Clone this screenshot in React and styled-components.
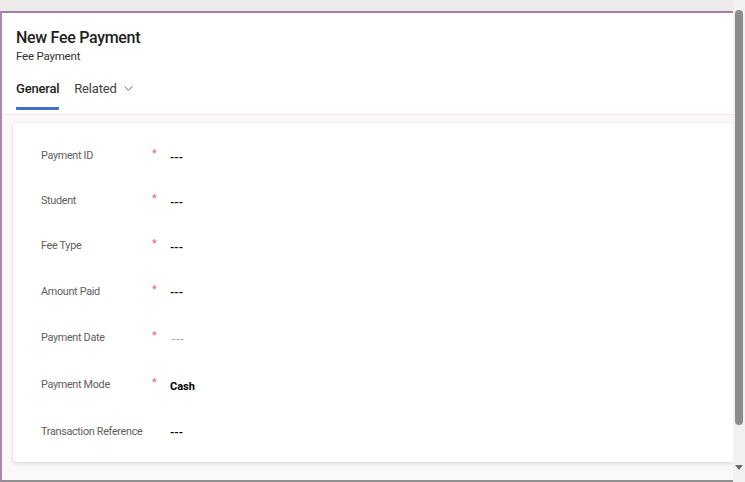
import styled, { createGlobalStyle } from 'styled-components';

const GlobalStyle = createGlobalStyle`
  html, body {
    margin: 0;
    padding: 0;
    background: #ecebea;
    font-family: 'Roboto', 'Open Sans', sans-serif;
    overflow: hidden;
  }
`;

// --- LAYOUT ---
const Page = styled.div`
  display: flex;
  width: 745px;
  height: 482px;
`;

const Main = styled.div`
  flex: 1;
  display: flex;
  flex-direction: column;
  padding-top: 11px;
  background: #ecebea;
`;

const Frame = styled.div`
  flex: 1;
  display: flex;
  flex-direction: column;
  border-top: 2px solid #a47ea5;
  border-left: 2px solid #b184b2;
  border-bottom: 2px solid #8f8f8f;
  background: #faf9f8;
`;

const Header = styled.div`
  background: #ffffff;
  padding: 14px 0 4px 14px;
  border-bottom: 1px solid #edebe9;
`;

const Title = styled.h1`
  margin: 0;
  font-size: 16px;
  line-height: 22px;
  font-weight: 500;
  letter-spacing: -0.3px;
  color: #201f1e;
`;

const Subtitle = styled.div`
  font-size: 11.5px;
  line-height: 14px;
  letter-spacing: -0.2px;
  color: #323130;
`;

const Tabs = styled.div`
  display: flex;
  gap: 15px;
  margin-top: 14px;
`;

const Tab = styled.div`
  display: flex;
  align-items: center;
  gap: 6px;
  height: 22px;
  padding-bottom: 8px;
  font-size: 13px;
  letter-spacing: -0.2px;
  font-weight: ${p => (p.active ? 500 : 400)};
  color: ${p => (p.active ? '#201f1e' : '#424242')};
  border-bottom: 3px solid ${p => (p.active ? '#3f6fd0' : 'transparent')};
  border-radius: 1px;
`;

const Body = styled.div`
  flex: 1;
  padding: 8px 0 0 11px;
`;

const Card = styled.div`
  background: #ffffff;
  border-radius: 4px 0 0 4px;
  box-shadow: 0 0 2px rgba(0, 0, 0, 0.12), 0 2px 4px rgba(0, 0, 0, 0.1);
  padding: 10px 0 8px 28px;
`;

const Row = styled.div`
  display: flex;
  align-items: center;
  height: ${p => p.h}px;
`;

const Label = styled.div`
  width: 111px;
  white-space: nowrap;
  font-size: 10.8px;
  letter-spacing: -0.3px;
  color: #605e5c;
`;

const Required = styled.span`
  width: 18px;
  font-size: 11px;
  color: #e0666a;
  margin-top: -4px;
`;

const Value = styled.div`
  font-size: 11px;
  font-weight: ${p => (p.empty ? 400 : 700)};
  letter-spacing: ${p => (p.empty ? '1.2px' : '0')};
  padding-left: ${p => (p.empty ? '2px' : '0')};
  color: ${p => (p.empty ? '#8a8886' : '#000000')};
  margin-top: 3px;
`;

// --- SCROLLBAR ---
const ScrollTrack = styled.div`
  width: 12px;
  background: #f1f1f1;
  display: flex;
  flex-direction: column;
  align-items: center;
  padding-top: 10px;
`;

const Thumb = styled.div`
  width: 8px;
  height: 415px;
  background: #8c8c8c;
  border-radius: 4px;
`;

const Arrow = styled.div`
  margin-top: 40px;
  width: 0;
  height: 0;
  border-left: 4px solid transparent;
  border-right: 4px solid transparent;
  border-top: 5px solid #6a6a6a;
`;

const fields = [
  { label: 'Payment ID', required: true, value: '---', h: 45 },
  { label: 'Student', required: true, value: '---', h: 45 },
  { label: 'Fee Type', required: true, value: '---', h: 45 },
  { label: 'Amount Paid', required: true, value: '---', h: 46 },
  { label: 'Payment Date', required: true, value: '---', empty: true, h: 47 },
  { label: 'Payment Mode', required: true, value: 'Cash', h: 47 },
  { label: 'Transaction Reference', required: false, value: '---', h: 46 },
];

const Chevron = () => (
  <svg width="11" height="11" viewBox="0 0 12 12" fill="none">
    <path d="M2 4l4 4 4-4" stroke="#605e5c" strokeWidth="1" strokeLinecap="round" strokeLinejoin="round" />
  </svg>
);

const App = () => (
  <Page>
    <GlobalStyle />
    <Main>
      <Frame>
        <Header>
          <Title>New Fee Payment</Title>
          <Subtitle>Fee Payment</Subtitle>
          <Tabs>
            <Tab active>General</Tab>
            <Tab>
              Related <Chevron />
            </Tab>
          </Tabs>
        </Header>
        <Body>
          <Card>
            {fields.map(f => (
              <Row key={f.label} h={f.h}>
                <Label>{f.label}</Label>
                <Required>{f.required ? '*' : ''}</Required>
                <Value empty={f.empty}>{f.value}</Value>
              </Row>
            ))}
          </Card>
        </Body>
      </Frame>
    </Main>
    <ScrollTrack>
      <Thumb />
      <Arrow />
    </ScrollTrack>
  </Page>
);

export default App;
